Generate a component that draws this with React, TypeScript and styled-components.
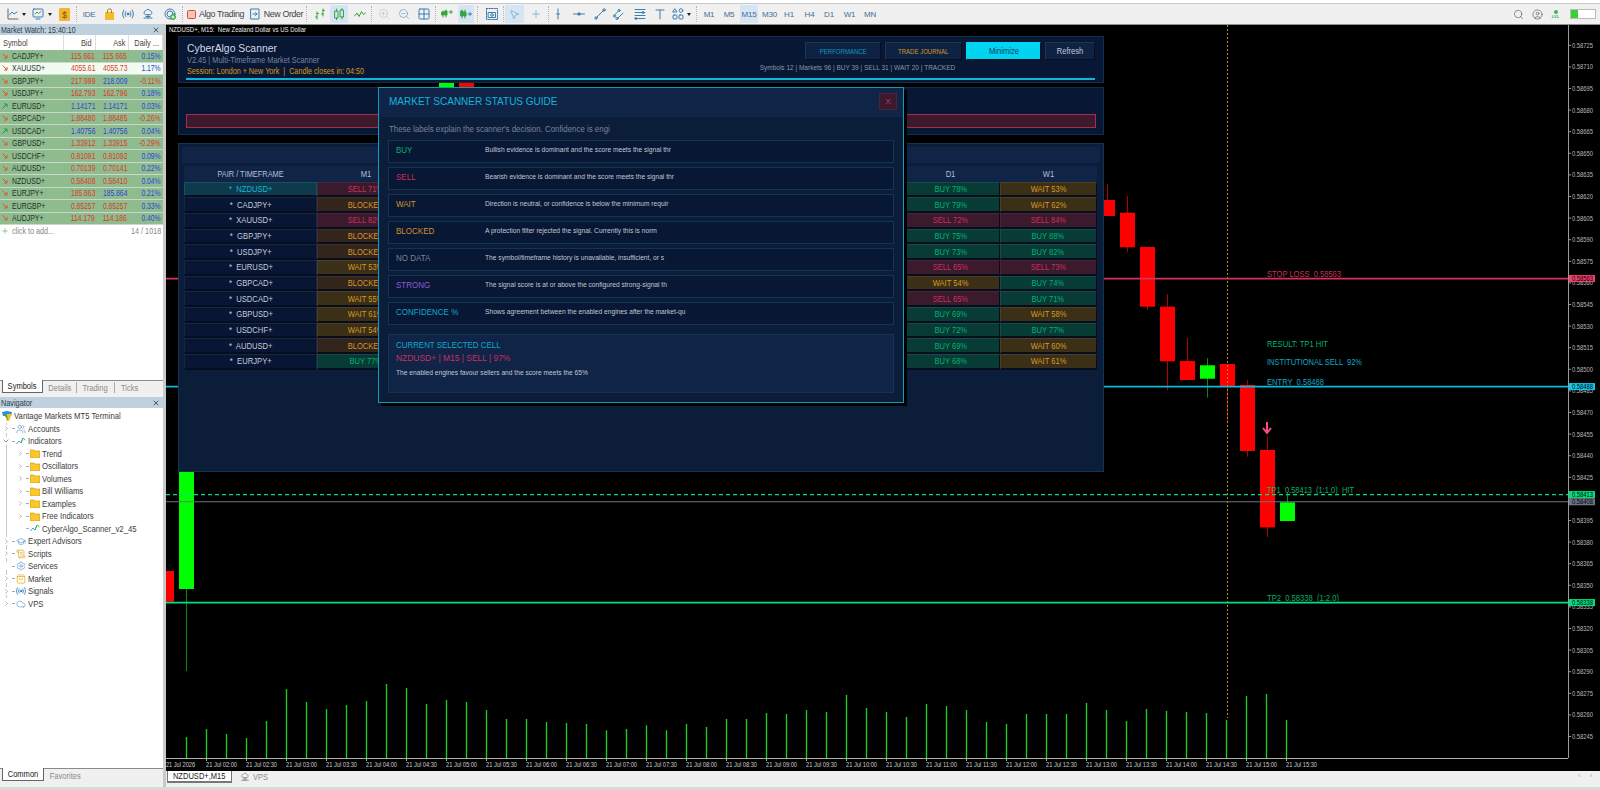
import React from 'react'
import styled, { createGlobalStyle } from 'styled-components'
import {
  ChevronRight, ChevronDown, CircleUser, Cloud, GraduationCap, MousePointer2, Plus, ScrollText,
  Search, Settings, ShoppingBag, Users, X, ZoomIn, ZoomOut,
} from 'lucide-react'

const Global = createGlobalStyle`
  html, body { margin: 0; padding: 0; background: #f0f0f0; }
  body { font-family: "Liberation Sans", Arial, sans-serif; }
  * { box-sizing: border-box; }
`

// the terminal's text is narrower than any installed font, so squeeze it a little
const Sq = styled.span<{ $x?: number; $o?: string }>`
  display: inline-block;
  white-space: nowrap;
  transform: scaleX(${p => p.$x ?? 0.88});
  transform-origin: ${p => p.$o ?? 'left'} center;
`

const Shell = styled.div`
  width: 1600px;
  height: 790px;
  overflow: hidden;
  display: flex;
  flex-direction: column;
`
const MenuStrip = styled.div`
  height: 4px;
  background: #fff;
  border-bottom: 1px solid #c8c8c8;
`
const Toolbar = styled.div`
  height: 20px;
  display: flex;
  align-items: center;
  padding: 0 4px 0 6px;
  background: #f0f0f0;
  color: #3c7fae;
`
const Tool = styled.div<{ $w: number; $ml?: number; $active?: boolean }>`
  flex: none;
  width: ${p => p.$w}px;
  height: 18px;
  margin-left: ${p => p.$ml ?? 0}px;
  display: flex;
  align-items: center;
  justify-content: center;
  gap: 3px;
  font-size: 8px;
  white-space: nowrap;
  color: ${p => p.color ?? 'inherit'};
  background: ${p => (p.$active ? '#d5e5f3' : 'transparent')};
`
const Sep = styled.div<{ $w: number }>`
  flex: none;
  width: ${p => p.$w}px;
  height: 16px;
  display: flex;
  justify-content: center;
  &::before { content: ""; border-left: 1px dotted #b5b5b5; }
`
const Caret = styled.span`
  width: 0;
  height: 0;
  border-left: 2.5px solid transparent;
  border-right: 2.5px solid transparent;
  border-top: 3px solid #222;
`
const ToolLabel = styled.span`
  color: #444;
  font-size: 8.8px;
  letter-spacing: -0.35px;
`
const TfLabel = styled.span`
  color: #3f6f96;
  font-size: 8px;
  letter-spacing: -0.2px;
`
const RightTools = styled.div`
  margin-left: auto;
  display: flex;
  align-items: center;
  gap: 8px;
  color: #444;
`
const Battery = styled.div`
  width: 26px;
  height: 10px;
  margin-left: 2px;
  background: #fff;
  border: 1px solid #bbb;
  &::before { content: ""; display: block; width: 7px; height: 100%; background: #37d037; }
`
const LvlBadge = styled.div`
  width: 9px;
  display: flex;
  flex-direction: column;
  align-items: center;
  color: #3bb54a;
  font-size: 4px;
  line-height: 4px;
  font-weight: bold;
  &::before { content: ""; width: 4px; height: 4px; margin-bottom: 1px; border-radius: 50%; background: #3bb54a; }
`
const Main = styled.div`
  flex: 1;
  min-height: 0;
  display: flex;
`
const LeftPanel = styled.div`
  width: 163px;
  flex: none;
  display: flex;
  flex-direction: column;
  background: #fff;
  color: #333;
`
const Splitter = styled.div`
  width: 3px;
  flex: none;
  background: #c9c9c9;
`
const MarketWatch = styled.div`
  height: 373px;
  flex: none;
  display: flex;
  flex-direction: column;
`
const PanelTitle = styled.div`
  height: 11px;
  flex: none;
  padding: 0 3px 0 1px;
  display: flex;
  align-items: center;
  justify-content: space-between;
  background: #bfd0df;
  color: #2b3a46;
  font-size: 8.6px;
`
const WatchGrid = styled.div<{ $bg?: string }>`
  display: grid;
  grid-template-columns: 64px 32px 33px 34px;
  height: ${p => (p.$bg ? '12.5px' : '15px')};
  flex: none;
  align-items: center;
  background: ${p => p.$bg ?? '#fff'};
  border-bottom: ${p => (p.$bg ? '1px solid #c9d8c9' : 'none')};
  font-size: 8.7px;
`
const HeadCell = styled.div<{ $left?: boolean }>`
  height: 100%;
  padding: 0 3px;
  display: flex;
  align-items: center;
  justify-content: ${p => (p.$left ? 'flex-start' : 'flex-end')};
  border-right: 1px solid #ddd;
  color: #444;
`
const SymbolCell = styled.div`
  display: flex;
  align-items: center;
  gap: 4px;
  padding-left: 2px;
  color: #26302a;
`
const PriceCell = styled.div<{ $c: string }>`
  text-align: right;
  padding-right: 2px;
  color: ${p => p.$c};
`
const AddRow = styled.div`
  height: 12.5px;
  flex: none;
  display: flex;
  align-items: center;
  justify-content: space-between;
  padding: 0 2px 0 1px;
  color: #888;
  font-size: 8.2px;
`
const AddLabel = styled.span`
  display: flex;
  align-items: center;
  gap: 3px;
`
const Spacer = styled.div`
  flex: 1;
  min-height: 0;
`
const TabBar = styled.div<{ $h: number }>`
  height: ${p => p.$h}px;
  flex: none;
  display: flex;
  align-items: flex-start;
  padding-left: 2px;
  background: #f0f0f0;
  border-top: 1px solid #8a8a8a;
  font-size: 8.4px;
  color: #8b8b8b;
`
const Tab = styled.div<{ $active?: boolean; $w: number; $divider?: boolean }>`
  width: ${p => p.$w}px;
  height: ${p => (p.$active ? '13px' : '11px')};
  flex: none;
  display: flex;
  align-items: center;
  justify-content: center;
  margin-top: ${p => (p.$active ? '-1px' : '1px')};
  color: ${p => (p.$active ? '#222' : '#8b8b8b')};
  background: ${p => (p.$active ? '#fff' : 'transparent')};
  border: ${p => (p.$active ? '1px solid #666' : 'none')};
  border-top: none;
  border-right: ${p => (p.$divider ? '1px solid #aaa' : p.$active ? '1px solid #666' : 'none')};
`
const Tree = styled.div`
  flex: 1;
  min-height: 0;
  padding-top: 2px;
  display: flex;
  flex-direction: column;
  font-size: 8.7px;
  color: #3b3b3b;
`
const TreeRow = styled.div<{ $depth: number; $guide?: boolean }>`
  height: 12.5px;
  flex: none;
  display: flex;
  align-items: center;
  gap: 2px;
  padding-left: ${p => 2 + p.$depth * 14}px;
  white-space: nowrap;
  background: ${p => (p.$guide ? 'linear-gradient(#c8c8c8, #c8c8c8) 6px 0 / 1px 100% no-repeat' : 'none')};
`
const Twist = styled.span`
  width: 8px;
  height: 8px;
  flex: none;
  display: flex;
  align-items: center;
  justify-content: center;
  color: #555;
  background: #fff;
`
const TreeDash = styled.span`
  width: 2px;
  flex: none;
  border-top: 1px dotted #aaa;
`
const TreeIcon = styled.span<{ $c?: string }>`
  width: 10px;
  height: 10px;
  flex: none;
  display: flex;
  align-items: center;
  justify-content: center;
  color: ${p => p.$c ?? '#2f7fc0'};
`
const ChartColumn = styled.div`
  flex: 1;
  min-width: 0;
  display: flex;
  flex-direction: column;
`
const ChartArea = styled.div`
  position: relative;
  flex: 1;
  min-height: 0;
  background: #000;
  border-top: 1px solid #8f8f8f;
`
const ChartSvg = styled.svg`
  display: block;
  width: 100%;
  height: 100%;
  font-family: "Liberation Sans", Arial, sans-serif;
`
const ChartTabs = styled.div`
  height: 16px;
  flex: none;
  display: flex;
  align-items: flex-start;
  gap: 8px;
  padding-left: 1px;
  background: #f0f0f0;
  font-size: 8.4px;
  color: #8b8b8b;
`
const ChartTab = styled.div`
  width: 65px;
  height: 12px;
  display: flex;
  align-items: center;
  justify-content: center;
  background: #fff;
  color: #222;
  border: 1px solid #777;
  border-top: none;
  border-bottom-width: 2px;
`
const VpsTab = styled.div`
  height: 12px;
  display: flex;
  align-items: center;
  gap: 3px;
`
const ScrollHint = styled.div`
  margin-left: auto;
  padding: 1px 8px 0 0;
  display: flex;
  gap: 9px;
  color: #aaa;
  font-size: 7px;
`
const StatusLine = styled.div`
  height: 3px;
  flex: none;
  background: #d8d8d8;
`

/* scanner panels float over the chart */
const Scanner = styled.div`
  position: absolute;
  left: 12px;
  top: 11px;
  width: 926px;
  display: flex;
  flex-direction: column;
  color: #c3cbd9;
`
const HeaderCard = styled.div`
  height: 47px;
  padding: 5px 8px 2px 7px;
  display: flex;
  flex-direction: column;
  background: #081733;
  border: 1px solid #0d3050;
`
const HeaderTop = styled.div`
  display: flex;
  justify-content: space-between;
  flex: 1;
  min-height: 0;
`
const Brand = styled.div`
  display: flex;
  flex-direction: column;
  padding-left: 1px;
`
const BrandName = styled.div`
  color: #d3d9e4;
  font-size: 11.4px;
  line-height: 13px;
`
const BrandSub = styled.div`
  color: #77849e;
  font-size: 8.4px;
  line-height: 10px;
`
const BrandSession = styled.div`
  color: #d39a24;
  font-size: 8.4px;
  line-height: 12px;
`
const HeaderRight = styled.div`
  display: flex;
  flex-direction: column;
  align-items: flex-end;
`
const Buttons = styled.div`
  display: flex;
  gap: 4px;
`
const PanelButton = styled.div<{ $w: number; $c: string; $bg?: string; $size?: number }>`
  width: ${p => p.$w}px;
  height: 18px;
  display: flex;
  align-items: center;
  justify-content: center;
  font-size: ${p => p.$size ?? 7}px;
  color: ${p => p.$c};
  background: ${p => p.$bg ?? '#0e2244'};
  border: 1px solid ${p => (p.$bg ? p.$bg : '#1f3554')};
  border-bottom-color: #060e20;
  border-right-color: #060e20;
`
const Counters = styled.div`
  margin: 3px 140px 0 0;
  color: #8c96a8;
  font-size: 7.4px;
`
const AccentRule = styled.div`
  height: 2px;
  flex: none;
  background: #10b6d8;
`
const AlertCard = styled.div`
  height: 48px;
  margin-top: 4px;
  padding: 26px 7px 0;
  background: #081733;
  border: 1px solid #0d3050;
`
const AlertBar = styled.div`
  height: 14px;
  background: #3c1a2c;
  border: 1px solid #a82c50;
`
const MatrixCard = styled.div`
  height: 329px;
  margin-top: 8px;
  padding: 3px 3px 0;
  display: flex;
  flex-direction: column;
  background: #0c1d3a;
  border: 1px solid #123553;
`
const MatrixBand = styled.div`
  height: 16px;
  flex: none;
  background: #102447;
`
const MatrixGrid = styled.div`
  margin: 3px 2px 0;
  display: grid;
  grid-template-columns: 133px repeat(8, 97.5px);
  grid-auto-rows: 15.67px;
`
const HeadLabel = styled.div`
  height: 16px;
  display: flex;
  align-items: center;
  justify-content: center;
  background: #102447;
  font-size: 8.6px;
  color: #b5bfd2;
`
const PairCell = styled.div<{ $on?: boolean }>`
  display: flex;
  align-items: center;
  justify-content: center;
  font-size: 8.7px;
  color: ${p => (p.$on ? '#10b8d8' : '#c3cbd9')};
  background: ${p => (p.$on ? '#0d3a4c' : '#081633')};
  border: 1px solid ${p => (p.$on ? '#17505e' : '#14264a')};
  border-bottom: 2px solid #060d1c;
`
const statusTheme: Record<string, { fg: string; bg: string; line: string }> = {
  BUY: { fg: '#00b26f', bg: '#083a36', line: '#174c46' },
  SELL: { fg: '#c9305c', bg: '#3a1a2c', line: '#4a2438' },
  WAIT: { fg: '#d69a24', bg: '#3b2f18', line: '#4e3f22' },
  BLOCKED: { fg: '#d6942c', bg: '#33241c', line: '#443024' },
  NONE: { fg: '#777', bg: '#0a1e36', line: '#14304c' },
}
const StatusCell = styled.div<{ $k: string }>`
  display: flex;
  align-items: center;
  justify-content: center;
  font-size: 8.7px;
  color: ${p => statusTheme[p.$k].fg};
  background: ${p => statusTheme[p.$k].bg};
  border: 1px solid ${p => statusTheme[p.$k].line};
  border-bottom: 2px solid #060d1c;
  border-right-color: #060d1c;
`

/* guide dialog lies over the scanner */
const Modal = styled.div`
  position: absolute;
  left: 200px;
  top: 51px;
  width: 526px;
  height: 316px;
  display: flex;
  flex-direction: column;
  background: #0c1d3a;
  border: 1px solid #0f9cb8;
  box-shadow: 3px 3px 0 #000;
`
const ModalHead = styled.div`
  height: 29px;
  flex: none;
  padding: 0 6px 3px 10px;
  display: flex;
  align-items: center;
  justify-content: space-between;
  background: #102447;
`
const ModalTitle = styled.div`
  color: #12b4d8;
  font-size: 11px;
`
const CloseButton = styled.div`
  width: 18px;
  height: 17px;
  display: flex;
  align-items: center;
  justify-content: center;
  color: #c9305c;
  font-size: 8px;
  background: #3a1a2c;
  border: 1px solid #4a2438;
`
const ModalNote = styled.div`
  height: 23px;
  flex: none;
  padding: 0 0 0 10px;
  display: flex;
  align-items: center;
  color: #76839c;
  font-size: 8.4px;
`
const GuideList = styled.div`
  padding: 0 9px;
  display: flex;
  flex-direction: column;
  gap: 4px;
`
const GuideRow = styled.div`
  height: 23px;
  flex: none;
  padding: 3px 0 0 7px;
  display: grid;
  grid-template-columns: 89px 1fr;
  background: #081733;
  border: 1px solid #123553;
`
const GuideLabel = styled.div<{ $c: string }>`
  color: ${p => p.$c};
  font-size: 8.8px;
  line-height: 12px;
`
const GuideText = styled.div`
  color: #c0c8d6;
  font-size: 7.4px;
  line-height: 11px;
`
const SelectedCard = styled.div`
  height: 59px;
  margin: 9px 9px 0;
  padding: 4px 7px 0;
  background: #102447;
  border: 1px solid #123553;
`
const SelectedTitle = styled.div`
  color: #12a8c8;
  font-size: 8.8px;
  line-height: 12px;
`
const SelectedValue = styled.div`
  color: #c9305c;
  font-size: 9.4px;
  line-height: 14px;
`
const SelectedText = styled.div`
  margin-top: 1px;
  color: #c0c8d6;
  font-size: 7.4px;
  line-height: 13px;
`

const ic = { fill: 'none', stroke: 'currentColor', strokeWidth: 1, strokeLinecap: 'round' as const, strokeLinejoin: 'round' as const }
const Svg = ({ children, s = 12 }: { children: React.ReactNode; s?: number }) => (
  <svg width={s} height={s} viewBox="0 0 12 12" {...ic}>{children}</svg>
)

const LineIcon = () => <Svg><path d="M1 1v10h10" stroke="#666" /><path d="M2.5 7l2.5-3 2 2 3-2" /></Svg>
const ProfileIcon = () => <Svg><rect x="1" y="1" width="10" height="8" rx="1" /><path d="M3 6l2-2 1.5 1.5L9 3.5" stroke="#3fa04f" /><path d="M4 11h4" /></Svg>
const CoinIcon = () => <svg width="11" height="13" viewBox="0 0 11 13"><rect width="11" height="13" rx="1" fill="#f4b631" /><text x="5.5" y="10" fontSize="9" textAnchor="middle" fill="#7a5200">$</text></svg>
const BagIcon = () => <svg width="11" height="12" viewBox="0 0 11 12"><path d="M1 4h9v8H1z" fill="#f2bb2f" /><path d="M3.5 5V2.2C3.5.5 7.5.5 7.5 2.2V5" fill="none" stroke="#a97f15" /></svg>
const SignalIcon = () => <Svg><circle cx="6" cy="6" r="1" fill="currentColor" /><path d="M3.8 3.5c-1 1.4-1 3.600 0 5M8.200 3.500c1 1.400 1 3.600 0 5M1.800 2c-1.600 2.400-1.600 5.600 0 8M10.200 2c1.600 2.400 1.600 5.600 0 8" /></Svg>
const VpsIcon = ({ s = 12 }: { s?: number }) => <Svg s={s}><path d="M3 6.500a2 2 0 0 1 .6-3.700 2.800 2.800 0 0 1 5 .400A1.800 1.800 0 0 1 9 6.500z" /><path d="M6 6.500V10M2 10h8M4 8.500h4" /></Svg>
const WebIcon = () => <Svg><circle cx="6" cy="6" r="5" /><circle cx="6" cy="6" r="3" /><circle cx="9" cy="9" r="2.500" fill="#3fae49" stroke="#3fae49" /><path d="M9 7.800v2.400M7.800 9h2.400" stroke="#fff" /></Svg>
const StopIcon = () => <svg width="9" height="9"><rect x=".5" y=".5" width="8" height="8" rx="1" fill="#f7c3b8" stroke="#d9483b" /></svg>
const OrderIcon = () => <Svg><path d="M2 1h8v10H2z" /><path d="M4 6h4M6.500 4.500L8 6 6.500 7.500" /></Svg>
const BarsIcon = () => <Svg><path d="M3 4v7M1.500 9H3M3 5.500h1.500M9 1v7M7.500 6H9M9 2.500h1.500" stroke="#35a53c" /></Svg>
const CandlesIcon = () => <Svg><rect x="2" y="3" width="3" height="7" stroke="#35a53c" /><rect x="7.500" y="2" width="3" height="7" stroke="#35a53c" /><path d="M3.500 1v2M3.500 10v2M9 .5V2M9 9v2" stroke="#35a53c" /></Svg>
const WaveIcon = () => <Svg><path d="M.5 8l2.500-3 2 3.500 2.500-5 2 3 2-1.500" stroke="#35a53c" /></Svg>
const GridIcon = () => <Svg><rect x="1" y="1" width="10" height="10" rx="1" /><path d="M1 6h10M6 1v10" /></Svg>
const AutoIcon = () => <Svg><path d="M2 3v6M5 2v7M8 4h3.500M10 2.500v3" stroke="#35a53c" /><rect x="1" y="4" width="2" height="3" fill="#35a53c" stroke="#35a53c" /><rect x="4" y="3" width="2" height="4" fill="#35a53c" stroke="#35a53c" /></Svg>
const ShiftIcon = () => <Svg><path d="M2 2v8M5 2v8" stroke="#35a53c" /><rect x="1" y="3" width="2" height="5" fill="#35a53c" stroke="#35a53c" /><rect x="4" y="4" width="2" height="4" fill="#35a53c" stroke="#35a53c" /><path d="M8 6h3.500M10 4.500v3" /></Svg>
const CameraIcon = () => <Svg><rect x=".5" y=".5" width="11" height="11" strokeDasharray="1.500 1" /><rect x="2.500" y="4.500" width="7" height="5" /><circle cx="6" cy="7" r="1.300" /></Svg>
const VLineIcon = () => <Svg><path d="M6 1v10M4.500 6h3" /></Svg>
const HLineIcon = () => <Svg><path d="M.5 6h11" /><circle cx="6" cy="6" r="1.200" fill="currentColor" /></Svg>
const TrendIcon = () => <Svg><path d="M2.500 9.500l7-7" /><circle cx="2" cy="10" r="1.200" /><circle cx="10" cy="2" r="1.200" /></Svg>
const ChannelIcon = () => <Svg><path d="M1.500 7l4-4M5 10l5-5" /><circle cx="1.500" cy="8" r="1.100" /><circle cx="6" cy="2.500" r="1.100" /><circle cx="4" cy="10.500" r="1.100" /></Svg>
const FibIcon = () => <Svg><path d="M1 1.500h10M1 4.500h10M1 7.500h10M1 10.500h10" /><circle cx="9" cy="4.500" r="1" /><circle cx="2" cy="10.500" r="1" /></Svg>
const TextIcon = () => <Svg><path d="M2 2h8M6 2v9" /></Svg>
const ShapesIcon = () => <Svg><path d="M3 1l2 3H1z" /><circle cx="9" cy="2.500" r="1.800" /><rect x="1" y="7" width="4" height="4" rx="1" /><rect x="7" y="7" width="4" height="4" rx="1" /></Svg>

type Item =
  | { kind: 'sep'; w: number }
  | { kind: 'caret'; w: number }
  | { kind: 'tool'; w: number; ml?: number; active?: boolean; icon?: React.ReactNode; label?: string; tf?: string; color?: string }

const toolbarItems: Item[] = [
  { kind: 'tool', w: 14, icon: <LineIcon /> },
  { kind: 'caret', w: 7 },
  { kind: 'tool', w: 16, ml: 3, icon: <ProfileIcon /> },
  { kind: 'caret', w: 7 },
  { kind: 'tool', w: 18, ml: 2, icon: <CoinIcon /> },
  { kind: 'sep', w: 7 },
  { kind: 'tool', w: 18, tf: 'IDE' },
  { kind: 'tool', w: 18, ml: 2, icon: <BagIcon /> },
  { kind: 'tool', w: 20, icon: <SignalIcon /> },
  { kind: 'tool', w: 20, icon: <VpsIcon /> },
  { kind: 'tool', w: 20, ml: 2, icon: <WebIcon /> },
  { kind: 'sep', w: 5 },
  { kind: 'tool', w: 61, icon: <StopIcon />, label: 'Algo Trading' },
  { kind: 'tool', w: 56, ml: 2, icon: <OrderIcon />, label: 'New Order' },
  { kind: 'sep', w: 5 },
  { kind: 'tool', w: 17, ml: 2, icon: <BarsIcon /> },
  { kind: 'tool', w: 18, ml: 2, active: true, icon: <CandlesIcon /> },
  { kind: 'tool', w: 21, ml: 1, icon: <WaveIcon /> },
  { kind: 'sep', w: 3 },
  { kind: 'tool', w: 21, color: '#a9b4bc', icon: <ZoomIn size={12} strokeWidth={1} /> },
  { kind: 'tool', w: 19, icon: <ZoomOut size={12} strokeWidth={1} /> },
  { kind: 'tool', w: 21, icon: <GridIcon /> },
  { kind: 'sep', w: 3 },
  { kind: 'tool', w: 20, icon: <AutoIcon /> },
  { kind: 'tool', w: 16, ml: 1, active: true, icon: <ShiftIcon /> },
  { kind: 'sep', w: 7 },
  { kind: 'tool', w: 21, icon: <CameraIcon /> },
  { kind: 'sep', w: 3 },
  { kind: 'tool', w: 19, active: true, icon: <MousePointer2 size={11} strokeWidth={1} /> },
  { kind: 'tool', w: 23, icon: <Plus size={12} strokeWidth={1} /> },
  { kind: 'sep', w: 3 },
  { kind: 'tool', w: 16, icon: <VLineIcon /> },
  { kind: 'tool', w: 26, icon: <HLineIcon /> },
  { kind: 'tool', w: 15, icon: <TrendIcon /> },
  { kind: 'tool', w: 24, icon: <ChannelIcon /> },
  { kind: 'tool', w: 17, icon: <FibIcon /> },
  { kind: 'tool', w: 23, icon: <TextIcon /> },
  { kind: 'tool', w: 14, icon: <ShapesIcon /> },
  { kind: 'caret', w: 8 },
  { kind: 'sep', w: 6 },
  { kind: 'tool', w: 20, tf: 'M1' },
  { kind: 'tool', w: 20, tf: 'M5' },
  { kind: 'tool', w: 18, ml: 1, active: true, tf: 'M15' },
  { kind: 'tool', w: 23, tf: 'M30' },
  { kind: 'tool', w: 16, tf: 'H1' },
  { kind: 'tool', w: 25, tf: 'H4' },
  { kind: 'tool', w: 14, tf: 'D1' },
  { kind: 'tool', w: 27, tf: 'W1' },
  { kind: 'tool', w: 14, tf: 'MN' },
]

const RED = '#dc3a28'
const BLUE = '#2a46d8'
const watch: [string, string, string, string, string, string, string, boolean][] = [
  ['CADJPY+', '115.661', '115.665', '0.15%', RED, RED, BLUE, false],
  ['XAUUSD+', '4055.61', '4055.73', '1.17%', RED, RED, BLUE, false],
  ['GBPJPY+', '217.999', '218.009', '-0.11%', RED, BLUE, RED, false],
  ['USDJPY+', '162.793', '162.796', '0.18%', RED, RED, BLUE, false],
  ['EURUSD+', '1.14171', '1.14171', '0.03%', BLUE, BLUE, BLUE, true],
  ['GBPCAD+', '1.88480', '1.88485', '-0.26%', RED, RED, RED, false],
  ['USDCAD+', '1.40756', '1.40756', '0.04%', BLUE, BLUE, BLUE, true],
  ['GBPUSD+', '1.33912', '1.33915', '-0.29%', RED, RED, RED, false],
  ['USDCHF+', '0.81091', '0.81092', '0.09%', RED, RED, BLUE, false],
  ['AUDUSD+', '0.70139', '0.70141', '0.22%', RED, RED, BLUE, false],
  ['NZDUSD+', '0.58408', '0.58410', '0.04%', RED, RED, BLUE, false],
  ['EURJPY+', '185.863', '185.864', '0.21%', RED, BLUE, BLUE, false],
  ['EURGBP+', '0.85257', '0.85257', '0.33%', RED, RED, BLUE, false],
  ['AUDJPY+', '114.179', '114.186', '0.40%', RED, RED, BLUE, false],
]

const Arrow = ({ up }: { up: boolean }) => (
  <svg width="6" height="6" viewBox="0 0 6 6" fill="none" stroke={up ? '#1c9a4a' : '#e0552a'} strokeWidth="1">
    {up ? <path d="M.5 5.500l4.500-4.500M2 1h3v3" /> : <path d="M.5.500l4.500 4.500M2 5h3V2" />}
  </svg>
)

const Folder = () => (
  <svg width="10" height="9" viewBox="0 0 10 9"><path d="M0 1h4l1 1h5v7H0z" fill="#fcc62d" stroke="#c79410" strokeWidth=".6" /></svg>
)
const IndicatorIcon = () => (
  <svg width="10" height="9" viewBox="0 0 10 9" fill="none"><path d="M.5 7l2.500-3 2 2 2-5" stroke="#3aa0d8" /><path d="M5 6l2-5 2.500 2" stroke="#45b35a" /></svg>
)
const VantageLogo = () => (
  <svg width="10" height="10" viewBox="0 0 10 10"><path d="M0 1l5-1 5 1-1 4H1z" fill="#2f8fd0" /><path d="M5 3h5L7 10H4z" fill="#f2c22e" /><path d="M2 4h3l1 5z" fill="#3fae49" /></svg>
)

const tree: { label: string; depth: number; guide?: boolean; twist?: 'r' | 'd' | 'n' | 'root'; icon: React.ReactNode; c?: string }[] = [
  { label: 'Vantage Markets MT5 Terminal', depth: 0, twist: 'root', icon: <VantageLogo /> },
  { label: 'Accounts', depth: 0, guide: true, twist: 'r', icon: <Users size={10} strokeWidth={1.2} /> },
  { label: 'Indicators', depth: 0, guide: true, twist: 'd', icon: <IndicatorIcon /> },
  { label: 'Trend', depth: 1, guide: true, twist: 'r', icon: <Folder /> },
  { label: 'Oscillators', depth: 1, guide: true, twist: 'r', icon: <Folder /> },
  { label: 'Volumes', depth: 1, guide: true, twist: 'r', icon: <Folder /> },
  { label: 'Bill Williams', depth: 1, guide: true, twist: 'r', icon: <Folder /> },
  { label: 'Examples', depth: 1, guide: true, twist: 'r', icon: <Folder /> },
  { label: 'Free Indicators', depth: 1, guide: true, twist: 'r', icon: <Folder /> },
  { label: 'CyberAlgo_Scanner_v2_45', depth: 1, guide: true, twist: 'n', icon: <IndicatorIcon /> },
  { label: 'Expert Advisors', depth: 0, guide: true, twist: 'r', icon: <GraduationCap size={11} strokeWidth={1.3} /> },
  { label: 'Scripts', depth: 0, guide: true, twist: 'r', c: '#e0a81c', icon: <ScrollText size={10} strokeWidth={1.6} /> },
  { label: 'Services', depth: 0, guide: true, twist: 'n', icon: <Settings size={10} strokeWidth={1.2} /> },
  { label: 'Market', depth: 0, guide: true, twist: 'r', c: '#e8b020', icon: <ShoppingBag size={10} strokeWidth={1.8} /> },
  { label: 'Signals', depth: 0, guide: true, twist: 'r', icon: <SignalIcon /> },
  { label: 'VPS', depth: 0, twist: 'r', icon: <Cloud size={10} strokeWidth={1.2} /> },
]

const parse = (s: string) => ({ k: s.split(' ')[0], s })
const matrix: [string, string, string, string][] = [
  ['NZDUSD+', 'SELL 71%', 'BUY 78%', 'WAIT 53%'],
  ['CADJPY+', 'BLOCKED', 'BUY 79%', 'WAIT 62%'],
  ['XAUUSD+', 'SELL 82%', 'SELL 72%', 'SELL 84%'],
  ['GBPJPY+', 'BLOCKED', 'BUY 75%', 'BUY 88%'],
  ['USDJPY+', 'BLOCKED', 'BUY 73%', 'BUY 82%'],
  ['EURUSD+', 'WAIT 53%', 'SELL 65%', 'SELL 73%'],
  ['GBPCAD+', 'BLOCKED', 'WAIT 54%', 'BUY 74%'],
  ['USDCAD+', 'WAIT 55%', 'SELL 65%', 'BUY 71%'],
  ['GBPUSD+', 'WAIT 61%', 'BUY 69%', 'WAIT 58%'],
  ['USDCHF+', 'WAIT 54%', 'BUY 72%', 'BUY 77%'],
  ['AUDUSD+', 'BLOCKED', 'BUY 69%', 'WAIT 60%'],
  ['EURJPY+', 'BUY 77%', 'BUY 68%', 'WAIT 61%'],
]

const guide: [string, string, string][] = [
  ['BUY', '#00b26f', 'Bullish evidence is dominant and the score meets the signal thr'],
  ['SELL', '#c9305c', 'Bearish evidence is dominant and the score meets the signal thr'],
  ['WAIT', '#d2962a', 'Direction is neutral, or confidence is below the minimum requir'],
  ['BLOCKED', '#d2902e', 'A protection filter rejected the signal. Currently this is norm'],
  ['NO DATA', '#77849e', 'The symbol/timeframe history is unavailable, insufficient, or s'],
  ['STRONG', '#8a5cd8', 'The signal score is at or above the configured strong-signal th'],
  ['CONFIDENCE %', '#12a8c8', 'Shows agreement between the enabled engines after the market-qu'],
]

// chart geometry, page coordinates shifted by the chart origin
const OX = 166
const OY = 25
const AXIS = 1568 - OX
const BASE = 758 - OY
const priceY = (p: number) => 45.3 + ((0.58725 - p) / 0.00015) * 21.6 - OY

const candles: [number, number, number, number, number, boolean][] = [
  // page x centre, wick top, body top, body bottom, wick bottom, bullish
  [166, 571, 571, 601.7, 601.7, false],
  [186, 300, 470, 589, 671, true],
  [446, 70, 75, 110, 130, true],
  [466, 70, 75, 110, 130, false],
  [1107, 184, 200, 216, 216, false],
  [1127, 196, 212.7, 247.3, 251.7, false],
  [1147, 247, 247, 306.7, 310, false],
  [1167, 294, 306.7, 361.3, 390, false],
  [1187, 337.7, 361, 380, 380, false],
  [1207, 358, 365.3, 378.7, 397.7, true],
  [1227, 364, 364, 386.7, 421, false],
  [1247, 380, 385, 451, 456.7, false],
  [1267, 436.7, 450, 527.3, 537, false],
  [1287, 492.7, 502.3, 521, 521, true],
]

const volumes = [
  21, 29, 24, 20, 37, 69, 56, 49, 53, 57, 74, 70, 54, 58, 56, 48, 39, 39, 36, 35, 34,
  27.7, 29, 32.7, 27.7, 34, 31, 39, 39, 45, 44, 48, 46, 63, 50, 46, 41, 54, 52, 48, 36, 34,
  44, 44, 44, 55, 48, 37, 49, 47, 46, 45, 38, 62, 64, 38,
]

const priceLabels = Array.from({ length: 33 }, (_, i) => (0.58725 - i * 0.00015).toFixed(5))
const hours = Array.from({ length: 28 }, (_, i) => {
  const m = 120 + i * 30
  return `21 Jul ${String(Math.floor(m / 60)).padStart(2, '0')}:${m % 60 === 0 ? '00' : '30'}`
})

const levels = [
  { p: 0.58563, c: '#d8305c', w: 1.6, tag: '#f0406e' },
  { p: 0.58488, c: '#10b8d8', w: 1.6, tag: '#10c8ec' },
  { p: 0.58413, c: '#00e080', w: 1.2, dash: '4 3', tag: '#00e080' },
  { p: 0.58408, c: '#6a7484', w: 1, tag: '#6a7484' },
  { p: 0.58338, c: '#00e080', w: 1.6, tag: '#00e080' },
]
const notes: [string, number, string, number][] = [
  ['STOP LOSS  0.58563', 274, '#c9305c', 74],
  ['RESULT: TP1 HIT', 344, '#00b26f', 61],
  ['INSTITUTIONAL SELL  92%', 362, '#10a8c8', 95],
  ['ENTRY  0.58488', 382, '#10a8c8', 57],
  ['TP1  0.58413  (1:1.0)  HIT', 490, '#00b26f', 87],
  ['TP2  0.58338  (1:2.0)', 598, '#00b26f', 72],
]

const ChartDrawing = () => (
  <ChartSvg viewBox="0 0 1434 746" preserveAspectRatio="xMinYMin slice">
    <text x="3" y="7" fontSize="7.4" fill="#e8e8e8" xmlSpace="preserve" textLength="137" lengthAdjust="spacingAndGlyphs">NZDUSD+, M15:  New Zealand Dollar vs US Dollar</text>
    {candles.map(([x, wt, bt, bb, wb, up], i) => (
      <g key={i}>
        <line x1={x - OX + 0.5} x2={x - OX + 0.5} y1={wt - OY} y2={wb - OY} stroke={up ? '#0a8a0a' : '#b00000'} />
        <rect x={x - OX - 7} y={bt - OY} width="15" height={bb - bt} fill={up ? '#00ff00' : '#ff0000'} />
      </g>
    ))}
    <line x1={1227.5 - OX} x2={1227.5 - OX} y1="0" y2={718 - OY} stroke="#c08a20" strokeDasharray="2 2" />
    {volumes.map((h, i) => (
      <line key={i} x1={20.5 + i * 20} x2={20.5 + i * 20} y1={BASE} y2={BASE - h} stroke="#20c820" strokeWidth="1.4" />
    ))}
    {levels.map(l => (
      <line key={l.p} x1="0" x2={AXIS} y1={priceY(l.p)} y2={priceY(l.p)} stroke={l.c} strokeWidth={l.w} strokeDasharray={l.dash} />
    ))}
    <path d={`M${1267 - OX} ${422 - OY}v10M${1263 - OX} ${428 - OY}l4 5 4-5`} fill="none" stroke="#ff4a80" strokeWidth="2" />
    {notes.map(([t, y, c, w]) => (
      <text key={t} x={1267 - OX} y={y + 3 - OY} fontSize="9" fill={c} xmlSpace="preserve" textLength={w} lengthAdjust="spacingAndGlyphs">{t}</text>
    ))}
    <line x1={AXIS + 0.5} x2={AXIS + 0.5} y1="0" y2={BASE} stroke="#9a9a9a" />
    <line x1="0" x2={AXIS} y1={BASE + 0.5} y2={BASE + 0.5} stroke="#b0b0b0" />
    {priceLabels.map(t => {
      const y = priceY(parseFloat(t))
      return (
        <g key={t}>
          <line x1={AXIS} x2={AXIS + 3} y1={y} y2={y} stroke="#9a9a9a" />
          <text x={AXIS + 4} y={y + 2.500} fontSize="7.2" fill="#b8b8b8" textLength="21" lengthAdjust="spacingAndGlyphs">{t}</text>
        </g>
      )
    })}
    {levels.map(l => (
      <g key={l.p}>
        <rect x={AXIS + 1} y={priceY(l.p) - 3.500} width="26" height="7" fill={l.tag} />
        <text x={AXIS + 4} y={priceY(l.p) + 2.500} fontSize="7.2" fill="#000" textLength="21" lengthAdjust="spacingAndGlyphs">{l.p.toFixed(5)}</text>
      </g>
    ))}
    <text x="0" y={BASE + 9} fontSize="7.2" fill="#cfcfcf" textLength="29" lengthAdjust="spacingAndGlyphs">21 Jul 2026</text>
    {hours.map((t, i) => (
      <g key={t}>
        <line x1={40.5 + i * 40} x2={40.5 + i * 40} y1={BASE} y2={BASE + 3} stroke="#b0b0b0" />
        <text x={40 + i * 40} y={BASE + 9} fontSize="7.2" fill="#cfcfcf" textLength="31" lengthAdjust="spacingAndGlyphs">{t}</text>
      </g>
    ))}
  </ChartSvg>
)

const ToolbarRow = () => (
  <Toolbar>
    {toolbarItems.map((it, i) => {
      if (it.kind === 'sep') return <Sep key={i} $w={it.w} />
      if (it.kind === 'caret') return <Tool key={i} $w={it.w}><Caret /></Tool>
      return (
        <Tool key={i} $w={it.w} $ml={it.ml} $active={it.active} color={it.color}>
          {it.icon}
          {it.label && <ToolLabel>{it.label}</ToolLabel>}
          {it.tf && <TfLabel>{it.tf}</TfLabel>}
        </Tool>
      )
    })}
    <RightTools>
      <Search size={11} strokeWidth={1.2} />
      <CircleUser size={11} strokeWidth={1.2} />
      <LvlBadge>LVL</LvlBadge>
      <Battery />
    </RightTools>
  </Toolbar>
)

const MarketWatchPanel = () => (
  <MarketWatch>
    <PanelTitle><Sq $x={0.82}>Market Watch: 15:40:10</Sq><X size={8} strokeWidth={2} color="#222" /></PanelTitle>
    <WatchGrid>
      <HeadCell $left><Sq $x={0.85}>Symbol</Sq></HeadCell>
      <HeadCell><Sq $x={0.85} $o="right">Bid</Sq></HeadCell>
      <HeadCell><Sq $x={0.85} $o="right">Ask</Sq></HeadCell>
      <HeadCell><Sq $x={0.85} $o="right">Daily ...</Sq></HeadCell>
    </WatchGrid>
    {watch.map(([sym, bid, ask, day, bidC, askC, dayC, up]) => (
      <WatchGrid key={sym} $bg={sym === 'XAUUSD+' ? '#f2fbf2' : '#8fbc8f'}>
        <SymbolCell><Arrow up={up} /><Sq $x={0.8}>{sym}</Sq></SymbolCell>
        <PriceCell $c={bidC}><Sq $x={0.78} $o="right">{bid}</Sq></PriceCell>
        <PriceCell $c={askC}><Sq $x={0.78} $o="right">{ask}</Sq></PriceCell>
        <PriceCell $c={dayC}><Sq $x={0.78} $o="right">{day}</Sq></PriceCell>
      </WatchGrid>
    ))}
    <AddRow>
      <AddLabel><Plus size={8} color="#3aa03a" strokeWidth={1.5} /><Sq $x={0.88}>click to add...</Sq></AddLabel>
      <Sq $x={0.88} $o="right">14 / 1018</Sq>
    </AddRow>
    <Spacer />
    <TabBar $h={17}>
      <Tab $active $w={41}><Sq $x={0.9} $o="center">Symbols</Sq></Tab>
      <Tab $w={34} $divider><Sq $x={0.9} $o="center">Details</Sq></Tab>
      <Tab $w={38} $divider><Sq $x={0.9} $o="center">Trading</Sq></Tab>
      <Tab $w={30}><Sq $x={0.9} $o="center">Ticks</Sq></Tab>
    </TabBar>
  </MarketWatch>
)

const NavigatorPanel = () => (
  <>
    <PanelTitle><Sq $x={0.85}>Navigator</Sq><X size={8} strokeWidth={2} color="#222" /></PanelTitle>
    <Tree>
      {tree.map(n => (
        <TreeRow key={n.label} $depth={n.depth} $guide={n.guide}>
          {n.twist !== 'root' && (
            <>
              <Twist>
                {n.twist === 'r' && <ChevronRight size={7} strokeWidth={1.5} />}
                {n.twist === 'd' && <ChevronDown size={8} strokeWidth={2} />}
              </Twist>
              <TreeDash />
            </>
          )}
          <TreeIcon $c={n.c}>{n.icon}</TreeIcon>
          <Sq $x={0.89}>{n.label}</Sq>
        </TreeRow>
      ))}
    </Tree>
    <TabBar $h={19}>
      <Tab $active $w={42}><Sq $x={0.9} $o="center">Common</Sq></Tab>
      <Tab $w={42}><Sq $x={0.9} $o="center">Favorites</Sq></Tab>
    </TabBar>
  </>
)

const ScannerPanels = () => (
  <Scanner>
    <HeaderCard>
      <HeaderTop>
        <Brand>
          <BrandName><Sq $x={0.91}>CyberAlgo Scanner</Sq></BrandName>
          <BrandSub><Sq $x={0.88}>V2.45 | Multi-Timeframe Market Scanner</Sq></BrandSub>
          <BrandSession><Sq $x={0.86}>Session: London + New York &nbsp;|&nbsp; Candle closes in: 04:50</Sq></BrandSession>
        </Brand>
        <HeaderRight>
          <Buttons>
            <PanelButton $w={76} $c="#109ac0"><Sq $x={0.86} $o="center">PERFORMANCE</Sq></PanelButton>
            <PanelButton $w={77} $c="#d2962a"><Sq $x={0.86} $o="center">TRADE JOURNAL</Sq></PanelButton>
            <PanelButton $w={75} $c="#0b3a55" $bg="#00d4f0" $size={8.6}><Sq $x={0.88} $o="center">Minimize</Sq></PanelButton>
            <PanelButton $w={50} $c="#c3cbd9" $size={8.6}><Sq $x={0.88} $o="center">Refresh</Sq></PanelButton>
          </Buttons>
          <Counters><Sq $x={0.88} $o="right">Symbols 12 | Markets 96 | BUY 39 | SELL 31 | WAIT 20 | TRACKED</Sq></Counters>
        </HeaderRight>
      </HeaderTop>
      <AccentRule />
    </HeaderCard>
    <AlertCard><AlertBar /></AlertCard>
    <MatrixCard>
      <MatrixBand />
      <MatrixGrid>
        <HeadLabel><Sq $x={0.86} $o="center">PAIR / TIMEFRAME</Sq></HeadLabel>
        {['M1', '', '', '', '', '', 'D1', 'W1'].map((h, i) => <HeadLabel key={i}><Sq $o="center">{h}</Sq></HeadLabel>)}
        {matrix.map(([pair, m1, d1, w1], r) => {
          const a = parse(m1), d = parse(d1), w = parse(w1)
          return (
            <React.Fragment key={pair}>
              <PairCell $on={r === 0}><Sq $x={0.88} $o="center">*&nbsp; {pair}</Sq></PairCell>
              <StatusCell $k={a.k}><Sq $x={0.87} $o="center">{a.s}</Sq></StatusCell>
              {[0, 1, 2, 3, 4].map(c => <StatusCell key={c} $k="NONE" />)}
              <StatusCell $k={d.k}><Sq $x={0.87} $o="center">{d.s}</Sq></StatusCell>
              <StatusCell $k={w.k}><Sq $x={0.87} $o="center">{w.s}</Sq></StatusCell>
            </React.Fragment>
          )
        })}
      </MatrixGrid>
    </MatrixCard>
    <Modal>
      <ModalHead>
        <ModalTitle><Sq $x={0.91}>MARKET SCANNER STATUS GUIDE</Sq></ModalTitle>
        <CloseButton>X</CloseButton>
      </ModalHead>
      <ModalNote><Sq $x={0.94}>These labels explain the scanner's decision. Confidence is engi</Sq></ModalNote>
      <GuideList>
        {guide.map(([label, c, text]) => (
          <GuideRow key={label}>
            <GuideLabel $c={c}><Sq $x={0.91}>{label}</Sq></GuideLabel>
            <GuideText><Sq $x={0.9}>{text}</Sq></GuideText>
          </GuideRow>
        ))}
      </GuideList>
      <SelectedCard>
        <SelectedTitle><Sq $x={0.9}>CURRENT SELECTED CELL</Sq></SelectedTitle>
        <SelectedValue><Sq $x={0.9}>NZDUSD+ | M15 | SELL | 97%</Sq></SelectedValue>
        <SelectedText><Sq $x={0.9}>The enabled engines favour sellers and the score meets the 65%</Sq></SelectedText>
      </SelectedCard>
    </Modal>
  </Scanner>
)

export default function App() {
  return (
    <Shell>
      <Global />
      <MenuStrip />
      <ToolbarRow />
      <Main>
        <LeftPanel>
          <MarketWatchPanel />
          <NavigatorPanel />
        </LeftPanel>
        <Splitter />
        <ChartColumn>
          <ChartArea>
            <ChartDrawing />
            <ScannerPanels />
          </ChartArea>
          <ChartTabs>
            <ChartTab><Sq $x={0.9} $o="center">NZDUSD+,M15</Sq></ChartTab>
            <VpsTab><VpsIcon s={10} /><Sq $x={0.9}>VPS</Sq></VpsTab>
            <ScrollHint><span>‹</span><span>›</span></ScrollHint>
          </ChartTabs>
        </ChartColumn>
      </Main>
      <StatusLine />
    </Shell>
  )
}
